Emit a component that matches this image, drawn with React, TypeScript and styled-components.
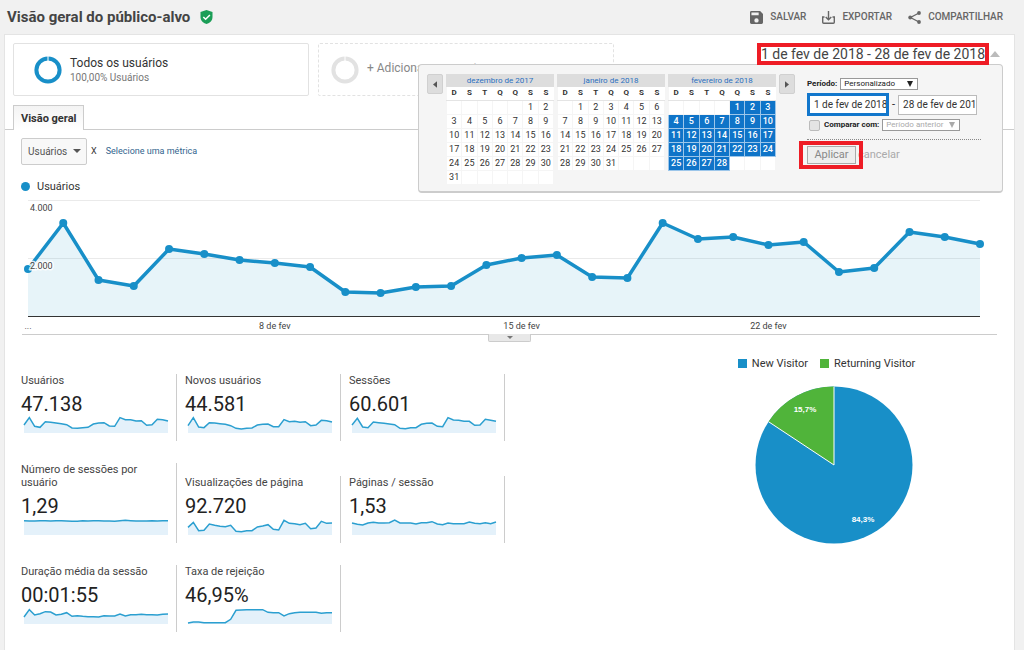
import React from "react";
import styled, { createGlobalStyle, css } from "styled-components";

const BLUE = "#188fc8";
const GREEN = "#50b43a";
const RED = "#ee1c25";

const GlobalStyle = createGlobalStyle`
  *, *::before, *::after { box-sizing: border-box; }
  body { margin: 0; background: #f1f1f1; color: #333; font: 11px/13px Roboto, Arial, sans-serif; }
  button, input, select { font-family: inherit; margin: 0; }
`;

const Page = styled.div`
  display: flex;
  flex-direction: column;
  min-height: 100vh;
`;

const Header = styled.header`
  display: flex;
  align-items: center;
  height: 34px;
  padding: 0 21px 0 7px;
`;

const Title = styled.h1`
  margin: 0 10px 0 0;
  font-size: 15px;
  line-height: 20px;
  font-weight: 700;
  color: #444;
`;

const Actions = styled.div`
  display: flex;
  gap: 16px;
  margin-left: auto;
`;

const Action = styled.button`
  display: flex;
  align-items: center;
  gap: 7px;
  padding: 0;
  border: 0;
  background: none;
  font-size: 10px;
  line-height: 16px;
  font-weight: 500;
  color: #666;
`;

const Panel = styled.main`
  flex: 1;
  margin: 0 9px 0 4px;
  background: #fff;
  border: 1px solid #e4e4e4;
  border-bottom: 0;
`;

const TopRow = styled.div`
  display: flex;
  align-items: flex-start;
  gap: 9px;
  padding: 8px 11px 9px 8px;
`;

const Segment = styled.section<{ $empty?: boolean }>`
  display: flex;
  align-items: center;
  flex: 0 1 296px;
  gap: 8px;
  height: 53px;
  padding-left: ${(p) => (p.$empty ? 12 : 20)}px;
  border: 1px ${(p) => (p.$empty ? "dashed" : "solid")} #e2e2e2;
  border-radius: 2px;
  white-space: nowrap;
`;

const SegmentName = styled.div`
  font-size: 12px;
  line-height: 16px;
`;

const SegmentShare = styled.div`
  font-size: 10px;
  line-height: 13px;
  color: #777;
`;

const AddSegment = styled.button`
  padding: 0 0 4px;
  border: 0;
  background: none;
  font-size: 12px;
  line-height: 16px;
  color: #888;
`;

const DateArea = styled.div`
  position: relative;
  display: flex;
  align-items: center;
  margin-left: auto;
  padding-right: 3px;
`;

const DateButton = styled.button`
  position: relative;
  z-index: 2;
  height: 22px;
  padding: 0;
  border: 4px solid ${RED};
  background: #fff;
  font-size: 14px;
  line-height: 14px;
  color: #444;
  white-space: nowrap;
`;

const UpArrow = styled.span`
  margin-left: 1px;
  border: 5px solid transparent;
  border-top: 0;
  border-bottom: 6px solid #bbb;
`;

const Popup = styled.div`
  position: absolute;
  z-index: 1;
  top: calc(100% - 1px);
  right: 0;
  display: flex;
  align-items: flex-start;
  gap: 3px;
  width: 585px;
  height: 129px;
  padding: 9px 0 0 8px;
  background: #f5f5f5;
  border: 1px solid #ccc;
  border-width: 1px 1px 2px;
  border-radius: 4px;
`;

const StepButton = styled.button`
  display: grid;
  place-items: center;
  flex: none;
  width: 16px;
  height: 20px;
  padding: 0;
  background: #ddd;
  border: 1px solid #d0d0d0;
  border-radius: 2px;
`;

const Month = styled.table`
  flex: none;
  width: 108px;
  table-layout: fixed;
  border-collapse: collapse;
  font-size: 9px;
  line-height: 12px;
  text-align: center;

  caption {
    height: 13px;
    background: #ddd;
    font-size: 8px;
    line-height: 13px;
    color: #2a6fc0;
  }
  th {
    height: 13px;
    padding: 0;
    background: #fff;
    border-bottom: 1px solid #e4e4e4;
    font-size: 8px;
    font-weight: 700;
    color: #333;
  }
`;

const Day = styled.td<{ $on?: boolean }>`
  height: 14px;
  padding: 0;
  background: #fff;
  border: 1px solid #f5f5f5;
  color: #333;
  ${(p) =>
    p.$on &&
    css`
      background: #0f74c8;
      border-color: #9cc6ea;
      color: #fff;
      font-weight: 500;
    `}
`;

const RangeForm = styled.form`
  display: flex;
  flex-direction: column;
  width: 174px;
  margin-left: 9px;
  padding-top: 4px;
  font-size: 8px;
  line-height: 12px;
  color: #222;
`;

const FormLine = styled.div<{ $indent?: boolean }>`
  display: flex;
  align-items: center;
  gap: 3px;
  padding-left: ${(p) => (p.$indent ? 2 : 0)}px;
`;

const FieldLabel = styled.label`
  font-weight: 700;
  white-space: nowrap;
`;

const SelectBox = styled.span<{ $muted?: boolean }>`
  position: relative;
  display: inline-flex;
  color: ${(p) => (p.$muted ? "#aaa" : "#222")};

  &::after {
    content: "";
    position: absolute;
    right: 5px;
    top: 3px;
    border: 3px solid transparent;
    border-top: 6px solid currentColor;
    border-bottom: 0;
    pointer-events: none;
  }
`;

const SmallSelect = styled.select`
  appearance: none;
  width: 78px;
  height: 12px;
  padding: 0 0 0 3px;
  background: #fff;
  border: 1px solid #999;
  border-radius: 0;
  font-size: 8px;
  line-height: 10px;
  color: inherit;
`;

const DateFields = styled.div`
  display: flex;
  align-items: center;
  gap: 3px;
  margin: 3px 0;
  font-size: 11px;
`;

const DateInput = styled.input<{ $active?: boolean }>`
  width: ${(p) => (p.$active ? 82 : 79)}px;
  height: ${(p) => (p.$active ? 23 : 20)}px;
  padding: 0 0 0 4px;
  border: ${(p) => (p.$active ? "3px solid #1277cc" : "1px solid #bbb")};
  border-radius: 0;
  background: #fff;
  font-size: 10px;
  color: #333;
  outline: 0;
`;

const Check = styled.input`
  appearance: none;
  width: 11px;
  height: 11px;
  margin-right: 1px;
  background: #e4e4e4;
  border: 1px solid #bbb;
  border-radius: 2px;
`;

const Buttons = styled.div`
  display: flex;
  align-items: center;
  gap: 2px;
  margin-top: 8px;
  padding-top: 6px;
  border-top: 1px dotted #888;
`;

const Highlight = styled.span`
  position: relative;
  display: inline-flex;

  &::after {
    content: "";
    position: absolute;
    inset: -5px -7px -5px -8px;
    border: 4px solid ${RED};
    pointer-events: none;
  }
`;

const ApplyButton = styled.button`
  width: 49px;
  height: 18px;
  padding: 0;
  background: #eee;
  border: 1px solid #aaa;
  font-size: 11px;
  line-height: 14px;
  color: #888;
`;

const CancelButton = styled.button`
  padding: 0;
  border: 0;
  background: none;
  font-size: 11px;
  line-height: 14px;
  color: #aaa;
`;

const Tabs = styled.div`
  display: flex;
  padding-left: 8px;
  border-bottom: 1px solid #ccc;
`;

const Tab = styled.button`
  height: 25px;
  margin-bottom: -1px;
  padding: 0 7px;
  background: linear-gradient(#f3f3f3, #fff);
  border: 1px solid #ccc;
  border-bottom: 0;
  font-size: 11px;
  font-weight: 700;
  color: #333;
`;

const MetricPicker = styled.div`
  display: flex;
  align-items: center;
  padding: 8px 16px 0;
`;

const MetricSelectBox = styled.span`
  position: relative;
  display: inline-flex;

  &::after {
    content: "";
    position: absolute;
    right: 6px;
    top: 11px;
    border: 4px solid transparent;
    border-top-color: #555;
    border-bottom: 0;
    pointer-events: none;
  }
`;

const MetricSelect = styled.select`
  appearance: none;
  width: 66px;
  height: 27px;
  padding: 0 0 0 6px;
  background: #f8f8f8;
  border: 1px solid #ccc;
  border-radius: 2px;
  font-size: 10px;
  color: #555;
`;

const Versus = styled.span`
  margin: 0 9px 0 4px;
  font-size: 9px;
`;

const MetricLink = styled.a`
  font-size: 9px;
  color: #33658e;
  text-decoration: none;
`;

const ChartLegend = styled.div`
  display: flex;
  align-items: center;
  gap: 7px;
  padding: 15px 16px 7px;
`;

const Dot = styled.span`
  width: 9px;
  height: 9px;
  border-radius: 50%;
  background: ${BLUE};
`;

const ChartBox = styled.div`
  margin: 0 17px;
  padding: 0 17px 0 6px;
  border-bottom: 1px solid #ccc;
`;

const ChartSvg = styled.svg`
  display: block;
  width: 100%;
  height: 134px;
  overflow: visible;
  font-size: 9px;
  fill: #444;
`;

const Handle = styled.button`
  display: grid;
  place-items: center;
  width: 43px;
  height: 8px;
  margin: -1px auto 0;
  padding: 0;
  background: #e8e8e8;
  border: 1px solid #ccc;
  border-top: 0;
  border-radius: 0 0 2px 2px;
`;

const Lower = styled.div`
  display: grid;
  grid-template-columns: 9fr 5fr;
  align-items: start;
`;

const Metrics = styled.section`
  display: grid;
  grid-template-columns: repeat(3, minmax(0, 156px));
  gap: 22px 8px;
  align-items: end;
  padding: 32px 0 17px 16px;
`;

const Metric = styled.article`
  padding-bottom: 8px;
  border-right: 1px solid #ccc;
`;

const MetricName = styled.div`
  padding-right: 20px;
  color: #444;
`;

const MetricValue = styled.div`
  padding-top: 5px;
  font-size: 20px;
  line-height: 25px;
  color: #222;
`;

const Spark = styled.svg`
  display: block;
  width: calc(100% - 11px);
  height: 16px;
  margin-left: 3px;
  overflow: visible;
`;

const PieFigure = styled.figure`
  width: 192px;
  margin: 15px auto 0;
`;

const PieLegend = styled.figcaption`
  display: flex;
  gap: 12px;
  margin-bottom: 16px;
  white-space: nowrap;
`;

const PieKey = styled.span<{ $color: string }>`
  display: flex;
  align-items: center;
  gap: 5px;

  &::before {
    content: "";
    width: 9px;
    height: 9px;
    background: ${(p) => p.$color};
  }
`;

const PieSvg = styled.svg`
  display: block;
  width: 158px;
  height: 158px;
  margin: 0 auto;
  font: 700 8px "Liberation Sans", Arial, sans-serif;
  fill: #fff;
`;

const USERS = [
  69, 23, 80, 86, 49, 54, 60, 63, 67, 92, 93, 87, 86, 65, 58, 55, 77, 78, 23, 39,
  37, 45, 42, 72, 68, 32, 37, 44,
];

const METRICS: { name: string; value: string; data: number[] }[] = [
  { name: "Usuários", value: "47.138", data: [24, 2, 28, 31, 14, 16, 18, 20, 23, 33, 34, 32, 31, 21, 18, 17, 27, 28, 2, 8, 8, 12, 11, 25, 23, 7, 8, 12] },
  { name: "Novos usuários", value: "44.581", data: [26, 2, 30, 32, 17, 18, 20, 22, 26, 34, 36, 34, 33, 24, 22, 21, 29, 29, 8, 14, 13, 16, 14, 26, 24, 10, 11, 15] },
  { name: "Sessões", value: "60.601", data: [24, 4, 30, 32, 15, 17, 19, 21, 23, 34, 35, 32, 32, 22, 19, 18, 28, 29, 2, 9, 10, 13, 13, 25, 24, 7, 10, 13] },
  { name: "Número de sessões por usuário", value: "1,29", data: [5, 6, 6, 5, 5, 6, 5, 5, 6, 7, 7, 5, 6, 5, 5, 6, 6, 7, 5, 4, 5, 6, 6, 6, 5, 6, 5, 5] },
  { name: "Visualizações de página", value: "92.720", data: [25, 10, 35, 34, 15, 19, 22, 23, 19, 37, 38, 35, 35, 24, 21, 17, 31, 33, 4, 13, 14, 17, 13, 29, 27, 7, 13, 12] },
  { name: "Páginas / sessão", value: "1,53", data: [12, 16, 18, 12, 10, 12, 12, 11, 3, 12, 12, 12, 15, 11, 11, 8, 15, 17, 12, 14, 14, 14, 9, 13, 14, 11, 14, 9] },
  { name: "Duração média da sessão", value: "00:01:55", data: [27, 5, 21, 17, 11, 12, 21, 19, 14, 25, 23, 25, 26, 26, 27, 23, 24, 24, 18, 24, 20, 20, 19, 20, 20, 21, 19, 18] },
  { name: "Taxa de rejeição", value: "46,95%", data: [45, 42, 42, 44, 44, 44, 44, 44, 34, 7, 6, 5, 5, 5, 5, 13, 14, 14, 24, 17, 14, 13, 13, 13, 13, 16, 14, 14] },
];

const MONTHS = [
  { name: "dezembro de 2017", start: 5, days: 31, selected: false },
  { name: "janeiro de 2018", start: 1, days: 31, selected: false },
  { name: "fevereiro de 2018", start: 4, days: 28, selected: true },
];

const toPoints = (data: number[]) => data.map((y, x) => `${x},${y}`).join(" ");
const percent = (i: number) => `${(i / 27) * 100}%`;

function Ring({ color }: { color: string }) {
  return (
    <svg width="28" height="28" viewBox="0 0 28 28" aria-hidden="true">
      <circle cx="14" cy="14" r="11.6" fill="none" stroke={color} strokeWidth="4" />
      <path d="M14 0v5" stroke="#fff" strokeWidth="1" />
    </svg>
  );
}

function MonthTable({ name, start, days, selected }: (typeof MONTHS)[number]) {
  const weeks = Math.ceil((start + days) / 7);
  return (
    <Month>
      <caption>{name}</caption>
      <thead>
        <tr>
          {["D", "S", "T", "Q", "Q", "S", "S"].map((d, i) => (
            <th key={i} scope="col">{d}</th>
          ))}
        </tr>
      </thead>
      <tbody>
        {Array.from({ length: weeks }, (_, w) => (
          <tr key={w}>
            {Array.from({ length: 7 }, (_, d) => {
              const day = w * 7 + d - start + 1;
              const valid = day > 0 && day <= days;
              return (
                <Day key={d} $on={selected && valid}>
                  {valid ? day : ""}
                </Day>
              );
            })}
          </tr>
        ))}
      </tbody>
    </Month>
  );
}

function DatePopup() {
  return (
    <Popup>
      <StepButton aria-label="Mês anterior">
        <svg width="4" height="7" viewBox="0 0 5 8"><path d="M5 0v8L0 4z" fill="#555" /></svg>
      </StepButton>
      {MONTHS.map((m) => (
        <MonthTable key={m.name} {...m} />
      ))}
      <StepButton aria-label="Próximo mês">
        <svg width="4" height="7" viewBox="0 0 5 8"><path d="M0 0v8l5-4z" fill="#555" /></svg>
      </StepButton>
      <RangeForm onSubmit={(e) => e.preventDefault()}>
        <FormLine>
          <FieldLabel htmlFor="period">Período:</FieldLabel>
          <SelectBox>
            <SmallSelect id="period"><option>Personalizado</option></SmallSelect>
          </SelectBox>
        </FormLine>
        <DateFields>
          <DateInput $active aria-label="Data inicial" defaultValue="1 de fev de 2018" />
          <span>-</span>
          <DateInput aria-label="Data final" defaultValue="28 de fev de 2018" />
        </DateFields>
        <FormLine $indent>
          <Check type="checkbox" id="compare" />
          <FieldLabel htmlFor="compare">Comparar com:</FieldLabel>
          <SelectBox $muted>
            <SmallSelect aria-label="Período de comparação"><option>Período anterior</option></SmallSelect>
          </SelectBox>
        </FormLine>
        <Buttons>
          <Highlight><ApplyButton type="submit">Aplicar</ApplyButton></Highlight>
          <CancelButton type="button">cancelar</CancelButton>
        </Buttons>
      </RangeForm>
    </Popup>
  );
}

function UsersChart() {
  return (
    <ChartSvg role="img" aria-label="Usuários por dia">
      <svg width="100%" height="117" viewBox="0 0 27 117" preserveAspectRatio="none" overflow="visible">
        <path d="M0 .5h27M0 58.5h27" stroke="#eaeaea" vectorEffect="non-scaling-stroke" />
        <polygon points={`0,117 ${toPoints(USERS)} 27,117`} fill={BLUE} fillOpacity="0.1" />
        <path d="M0 116.5h27" stroke="#333" vectorEffect="non-scaling-stroke" />
        <polyline points={toPoints(USERS)} fill="none" stroke={BLUE} strokeWidth="3.5" strokeLinejoin="round" vectorEffect="non-scaling-stroke" />
      </svg>
      {USERS.map((y, i) => (
        <circle key={i} cx={percent(i)} cy={y} r="4" fill={BLUE} />
      ))}
      <g stroke="#fff" strokeWidth="3" paintOrder="stroke" strokeOpacity="0.85">
        <text x="2" y="11">4.000</text>
        <text x="2" y="69">2.000</text>
      </g>
      <g textAnchor="middle">
        <text x="0" y="129">...</text>
        <text x={percent(7)} y="129">8 de fev</text>
        <text x={percent(14)} y="129">15 de fev</text>
        <text x={percent(21)} y="129">22 de fev</text>
      </g>
    </ChartSvg>
  );
}

export default function App() {
  return (
    <Page>
      <GlobalStyle />
      <Header>
        <Title>Visão geral do público-alvo</Title>
        <svg width="13" height="14" viewBox="0 0 12 14" aria-hidden="true">
          <path d="M6 0l6 2v5c0 3.500-2.500 6-6 7-3.500-1-6-3.500-6-7V2z" fill="#1b9e57" />
          <path d="M2.800 7l2.300 2.300L9.400 5" fill="none" stroke="#fff" strokeWidth="1.500" />
        </svg>
        <Actions>
          <Action>
            <svg width="13" height="13" viewBox="3 3 18 18" fill="#666" aria-hidden="true">
              <path d="M17 3H5a2 2 0 0 0-2 2v14a2 2 0 0 0 2 2h14a2 2 0 0 0 2-2V7l-4-4zm-5 16a3 3 0 1 1 0-6 3 3 0 0 1 0 6zm3-10H5V5h10v4z" />
            </svg>
            SALVAR
          </Action>
          <Action>
            <svg width="13" height="13" viewBox="0 0 13 13" fill="none" stroke="#666" strokeWidth="1.400" aria-hidden="true">
              <path d="M2.500 6H.7v5.300c0 .6.400 1 1 1h9.600c.6 0 1-.4 1-1V6h-1.800M6.500 0v8.500M3.700 6l2.800 2.800L9.300 6" />
            </svg>
            EXPORTAR
          </Action>
          <Action>
            <svg width="13" height="13" viewBox="0 0 13 13" aria-hidden="true">
              <path d="M11 2L2.500 6.500 11 11" fill="none" stroke="#666" strokeWidth="1.300" />
              <circle cx="11" cy="2" r="1.900" fill="#666" />
              <circle cx="2.200" cy="6.500" r="1.900" fill="#666" />
              <circle cx="11" cy="11" r="1.900" fill="#666" />
            </svg>
            COMPARTILHAR
          </Action>
        </Actions>
      </Header>
      <Panel>
        <TopRow>
          <Segment>
            <Ring color={BLUE} />
            <div>
              <SegmentName>Todos os usuários</SegmentName>
              <SegmentShare>100,00% Usuários</SegmentShare>
            </div>
          </Segment>
          <Segment $empty>
            <Ring color="#e2e2e2" />
            <AddSegment>+ Adicionar segmento</AddSegment>
          </Segment>
          <DateArea>
            <DateButton>1 de fev de 2018 - 28 de fev de 2018</DateButton>
            <UpArrow />
            <DatePopup />
          </DateArea>
        </TopRow>
        <Tabs>
          <Tab>Visão geral</Tab>
        </Tabs>
        <MetricPicker>
          <MetricSelectBox>
            <MetricSelect aria-label="Métrica"><option>Usuários</option></MetricSelect>
          </MetricSelectBox>
          <Versus>X</Versus>
          <MetricLink href="#metrica">Selecione uma métrica</MetricLink>
        </MetricPicker>
        <ChartLegend><Dot />Usuários</ChartLegend>
        <ChartBox><UsersChart /></ChartBox>
        <Handle aria-label="Expandir gráfico">
          <svg width="6" height="3" viewBox="0 0 6 3"><path d="M0 0h6L3 3z" fill="#777" /></svg>
        </Handle>
        <Lower>
          <Metrics>
            {METRICS.map((m) => (
              <Metric key={m.name}>
                <MetricName>{m.name}</MetricName>
                <MetricValue>{m.value}</MetricValue>
                <Spark viewBox="0 0 27 48" preserveAspectRatio="none" aria-hidden="true">
                  <polygon points={`0,48 ${toPoints(m.data)} 27,48`} fill="#e4f1fa" />
                  <polyline points={toPoints(m.data)} fill="none" stroke="#2b9fd0" strokeWidth="1.500" vectorEffect="non-scaling-stroke" />
                </Spark>
              </Metric>
            ))}
          </Metrics>
          <PieFigure>
            <PieLegend>
              <PieKey $color={BLUE}>New Visitor</PieKey>
              <PieKey $color={GREEN}>Returning Visitor</PieKey>
            </PieLegend>
            <PieSvg viewBox="0 0 158 158" role="img" aria-label="New Visitor 84,3%, Returning Visitor 15,7%">
              <circle cx="79" cy="79" r="78.500" fill={BLUE} />
              <path d="M79 79V.5A78.500 78.500 0 0 0 13.500 35.700z" fill={GREEN} />
              <path d="M79 .5V79L13.500 35.700" fill="none" stroke="#fff" strokeWidth="1" />
              <g textAnchor="middle">
                <text x="50" y="26">15,7%</text>
                <text x="108" y="136">84,3%</text>
              </g>
            </PieSvg>
          </PieFigure>
        </Lower>
      </Panel>
    </Page>
  );
}
